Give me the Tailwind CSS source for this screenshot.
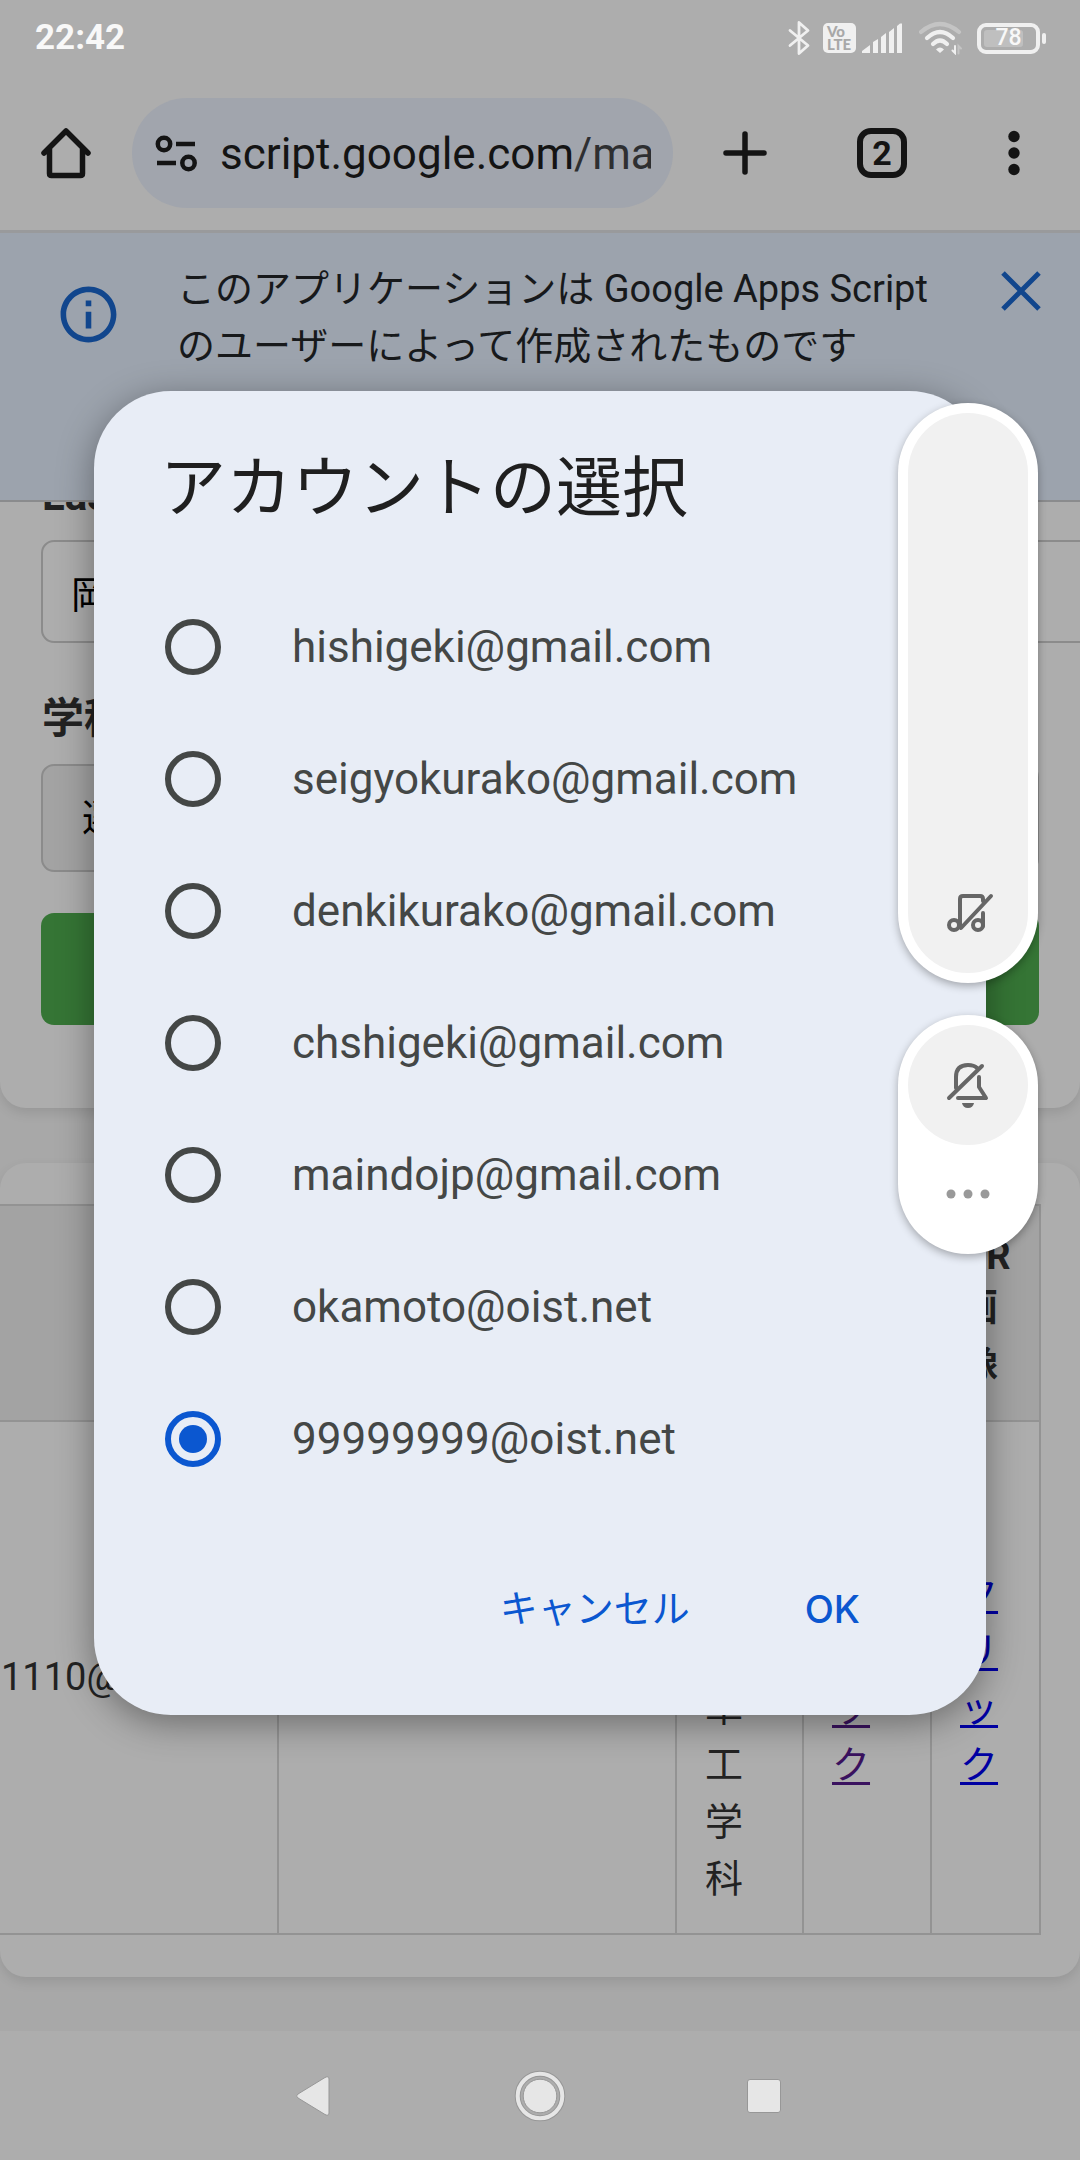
<!DOCTYPE html>
<html lang="ja">
<head>
<meta charset="utf-8">
<meta name="viewport" content="width=device-width, initial-scale=1">
<title>アカウントの選択</title>
<script src="https://cdn.jsdelivr.net/npm/@tailwindcss/browser@4"></script>
</head>
<body class="bg-[#adadad] font-['Roboto','Noto_Sans_CJK_JP',sans-serif] text-[#222]">
<div class="relative flex min-h-screen flex-col overflow-hidden">

  <!-- Status bar -->
  <header class="flex h-[75px] items-center justify-between pt-1 pr-[34px] pb-[3px] pl-[35px]">
    <time class="text-[35px] leading-10 font-bold text-[#f8f8f8]">22:42</time>
    <div class="flex items-center">
      <svg class="h-[36px] w-[24px]" viewBox="0 0 24 36" fill="none" stroke="#f0f0f0" stroke-width="2.8" stroke-linejoin="round" stroke-linecap="round"><path d="M3 10.500L21 25.500L12 33.500V2.500L21 10.500L3 25.500"/></svg>
      <span class="ml-3 flex h-[30px] w-[33px] flex-col items-start justify-center rounded-[5px] bg-[#f0f0f0] pl-1 font-['Lato',sans-serif] text-[15px] leading-[13px] font-black text-[#a8a8a8]"><span>Vo</span><span>LTE</span></span>
      <svg class="ml-1.5 h-[30px] w-[41px]" viewBox="0 0 41 30" fill="#f0f0f0"><path d="M0 30v-2l8-6v8zM11 30V19l5-3v14zM19 30V14l5-4v20zM27 30V9l5-4v25zM35 30V3l3-2.500h2V30z"/></svg>
      <svg class="ml-4 h-[34px] w-[44px]" viewBox="0 0 44 34" fill="none" stroke-width="4.200" stroke-linecap="round"><path d="M2 11Q21 -5 40 11" stroke="#c4c4c4"/><path d="M8 17Q21 5 34 17M14 23Q21 16 28 23" stroke="#f0f0f0"/><path d="M17 28.500q4-4 8 0l-4 3.500z" fill="#f0f0f0" stroke="none"/><path d="M36 25v7l-2.500-2.500" stroke="#f0f0f0" stroke-width="2" /><path d="M39.500 32.500V25l2.500 2.500" stroke="#c4c4c4" stroke-width="2"/></svg>
      <span class="relative ml-3.5 flex h-[31px] w-[63px] items-center justify-center rounded-[9px] border-[4px] border-[#f0f0f0] px-[3px]">
        <span class="absolute inset-y-[3px] right-[13px] left-[3px] rounded-[3px] bg-[#bfbfbf]"></span>
        <span class="relative text-[23px] leading-6 font-medium text-[#f8f8f8]">78</span>
      </span>
      <span class="ml-0.5 h-[11px] w-1 rounded-full bg-[#f0f0f0]"></span>
    </div>
  </header>

  <!-- Browser toolbar -->
  <div class="flex h-[158px] items-center border-b-[3px] border-[#999a9c] pt-px pr-[33px] pl-[33px] text-[#141414]">
    <button aria-label="ホーム" class="shrink-0"><svg class="h-[66px] w-[66px]" viewBox="0 0 66 66" fill="none" stroke="currentColor" stroke-width="5.500" stroke-linecap="round" stroke-linejoin="round"><path d="M11 33L33 11L55 33M16.500 28V53.500q0 2 2 2H47.500q2 0 2-2V28"/></svg></button>
    <div class="ml-[33px] flex h-[110px] min-w-0 flex-1 items-center rounded-full bg-[#a1a5ad] pr-[22px] pl-[22px]">
      <svg class="h-[42px] w-[44px] shrink-0" viewBox="0 0 44 42" fill="none" stroke="currentColor" stroke-width="4.500"><circle cx="10" cy="12" r="6.200"/><path d="M22 12H41M3 31H22"/><circle cx="34.500" cy="31" r="6.200"/></svg>
      <p class="ml-[22px] min-w-0 flex-1 overflow-hidden pt-0.5 text-[44px] leading-[60px] whitespace-nowrap">script.google.com<span class="text-[#2e2f31]">/ma</span></p>
    </div>
    <button aria-label="新しいタブ" class="ml-[39px] shrink-0"><svg class="h-[66px] w-[66px]" viewBox="0 0 66 66" stroke="currentColor" stroke-width="5.500" stroke-linecap="round"><path d="M33 14V52M14 33H52"/></svg></button>
    <button aria-label="タブを切り替える" class="ml-[79px] flex h-[50px] w-[50px] shrink-0 items-center justify-center rounded-[14px] border-[6px] border-current text-[34px] leading-10 font-bold">2</button>
    <button aria-label="メニュー" class="ml-[74px] shrink-0"><svg class="h-[66px] w-[66px]" viewBox="0 0 66 66" fill="currentColor"><circle cx="33" cy="16.500" r="5.700"/><circle cx="33" cy="33" r="5.700"/><circle cx="33" cy="49.500" r="5.700"/></svg></button>
  </div>

  <!-- Apps Script notice -->
  <section class="z-10 flex h-[269px] items-start border-b-2 border-[#8a8b8d] bg-[#9ca3ad] pt-[28px] pr-[33px] pl-[55px]">
    <svg class="mt-[20px] h-[67px] w-[67px] shrink-0" viewBox="0 0 24 24" fill="#11468d"><path d="M11 7h2v2h-2zm0 4h2v6h-2zm1-9C6.480 2 2 6.480 2 12s4.480 10 10 10 10-4.480 10-10S17.520 2 12 2zm0 18c-4.410 0-8-3.590-8-8s3.590-8 8-8 8 3.590 8 8-3.590 8-8 8z"/></svg>
    <p class="ml-[55px] flex-1 text-[38px] leading-[57px] text-[#17191b]">このアプリケーションは Google Apps Script のユーザーによって作成されたものです</p>
    <button aria-label="閉じる" class="ml-5 shrink-0"><svg class="h-[56px] w-[52px]" viewBox="0 0 52 56" stroke="#11468d" stroke-width="5"><path d="M8 12L44 48M44 12L8 48"/></svg></button>
  </section>

  <!-- Page content -->
  <main class="flex-1 bg-[#a8a8a8]">
    <form class="-mt-[36px] rounded-b-[26px] bg-[#adadad] px-[41px] pb-[83px] shadow-[0_5px_12px_rgba(0,0,0,0.1)]">
      <label for="last" class="block pl-px text-[42px] leading-[60px] font-bold">Last Name</label>
      <input id="last" type="text" value="岡" class="mt-[14px] h-[103px] w-[calc(100%+60px)] rounded-[13px] border-2 border-[#8b8b8b] px-[28px] text-[38px] text-black">
      <label for="dept" class="mt-[46px] block pl-px text-[42px] leading-[60px] font-bold">学科</label>
      <select id="dept" class="mt-[15px] block h-[108px] w-full appearance-none rounded-[13px] border-2 border-[#8b8b8b] bg-[#a3a3a3] px-[39px] text-[38px] text-black"><option>選択</option></select>
      <button type="button" aria-label="送信" class="mt-[41px] block h-[112px] w-full rounded-[13px] bg-[#357535]"></button>
    </form>

    <section class="mt-[55px] rounded-[26px] bg-[#adadad] pt-[41px] pr-[39px] pb-[42px] shadow-[0_5px_12px_rgba(0,0,0,0.1)]">
      <table class="w-full table-fixed border-collapse border-y-2 border-r-2 border-[#939393] text-left text-[38px] leading-[57px]">
        <colgroup><col class="w-[278px]"><col><col class="w-[127px]"><col class="w-[128px]"><col class="w-[109px]"></colgroup>
        <thead class="bg-[#a3a3a3]">
          <tr class="border-b-2 border-[#939393]">
            <th class="border-r-2 border-[#939393]"></th><th class="border-r-2 border-[#939393]"></th><th class="border-r-2 border-[#939393]"></th><th class="border-r-2 border-[#939393]"></th>
            <th class="px-[28px] py-[27px] font-bold"><span class="block leading-[46px]">QR</span>画像</th>
          </tr>
        </thead>
        <tbody>
          <tr>
            <td class="border-r-2 border-[#939393] pl-px">1110@</td>
            <td class="border-r-2 border-[#939393]"></td>
            <td class="border-r-2 border-[#939393] px-[28px] pt-[30px] pb-[25px]">機械自動車工学科</td>
            <td class="border-r-2 border-[#939393] px-[28px] pt-[5px]"><a href="#" class="text-[#3a125f] underline decoration-3 underline-offset-4">クリック</a></td>
            <td class="px-[28px] pt-[5px]"><a href="#" class="text-[#0000a2] underline decoration-3 underline-offset-4">クリック</a></td>
          </tr>
        </tbody>
      </table>
    </section>
    <div class="h-[54px]"></div>
  </main>

  <!-- System navigation -->
  <nav class="grid h-[130px] grid-cols-[1fr_414px_1fr] items-center">
    <button aria-label="戻る" class="justify-self-end"><svg class="h-[44px] w-[38px]" viewBox="0 0 38 44" fill="#e6e6e6" stroke="#979797"><path d="M3 20L30 3.500q4-2 4 1.500V39q0 3.500-4 1.500L3 24q-3-2 0-4z"/></svg></button>
    <button aria-label="ホーム画面" class="justify-self-center"><svg class="h-[52px] w-[52px]" viewBox="0 0 52 52" fill="none"><circle cx="26" cy="26" r="22.300" stroke="#979797" stroke-width="6"/><circle cx="26" cy="26" r="22.300" stroke="#e6e6e6" stroke-width="4"/><circle cx="26" cy="26" r="16.800" fill="#e6e6e6" stroke="#979797"/></svg></button>
    <button aria-label="最近のアプリ" class="h-[34px] w-[34px] rounded-[3px] border border-[#979797] bg-[#e6e6e6]"></button>
  </nav>

  <!-- Account chooser -->
  <div class="absolute inset-x-0 top-[75px] bottom-[130px] z-20 flex items-center px-[94px]">
    <form role="dialog" aria-labelledby="chooser" class="flex w-full flex-col rounded-[77px] bg-[#e8edf6] pt-[50px] pb-[51px] shadow-[0_8px_36px_rgba(0,0,0,0.38)]">
      <h1 id="chooser" class="px-[66px] text-[66px] leading-[96px] text-[#1f1f1f]">アカウントの選択</h1>
      <div class="mt-[44px] px-[71px] text-[44px] leading-[60px] text-[#444746]">
        <label class="flex h-[132px] items-center gap-[71px]"><input type="radio" name="account" class="h-[56px] w-[56px] appearance-none rounded-full border-[6px] border-[#444746]">hishigeki@gmail.com</label>
        <label class="flex h-[132px] items-center gap-[71px]"><input type="radio" name="account" class="h-[56px] w-[56px] appearance-none rounded-full border-[6px] border-[#444746]">seigyokurako@gmail.com</label>
        <label class="flex h-[132px] items-center gap-[71px]"><input type="radio" name="account" class="h-[56px] w-[56px] appearance-none rounded-full border-[6px] border-[#444746]">denkikurako@gmail.com</label>
        <label class="flex h-[132px] items-center gap-[71px]"><input type="radio" name="account" class="h-[56px] w-[56px] appearance-none rounded-full border-[6px] border-[#444746]">chshigeki@gmail.com</label>
        <label class="flex h-[132px] items-center gap-[71px]"><input type="radio" name="account" class="h-[56px] w-[56px] appearance-none rounded-full border-[6px] border-[#444746]">maindojp@gmail.com</label>
        <label class="flex h-[132px] items-center gap-[71px]"><input type="radio" name="account" class="h-[56px] w-[56px] appearance-none rounded-full border-[6px] border-[#444746]">okamoto@oist.net</label>
        <label class="flex h-[132px] items-center gap-[71px]"><input type="radio" name="account" checked class="h-[56px] w-[56px] appearance-none rounded-full border-[6px] border-[#0b57d0] bg-[#0b57d0] bg-clip-content p-2">99999999@oist.net</label>
      </div>
      <div class="mt-[49px] flex h-[110px] justify-end px-[71px] text-[38px] text-[#0b57d0]">
        <button type="button" class="px-[60px]">キャンセル</button>
        <button type="button" class="px-[55px] font-['Inter',sans-serif] font-medium">OK</button>
      </div>
    </form>
  </div>

  <!-- Volume controls -->
  <aside class="absolute top-[403px] right-[42px] z-30 flex w-[140px] flex-col gap-[32px] text-[#666]">
    <div class="h-[580px] rounded-full bg-white p-[10px] shadow-[0_3px_8px_rgba(0,0,0,0.3)]">
      <button aria-label="メディアの音量" class="flex h-full w-full items-end justify-center rounded-full bg-[#f1f1f1] pb-[35px] pl-1"><svg class="h-[50px] w-[52px]" viewBox="0 0 52 50" fill="none" stroke="currentColor" stroke-width="4" stroke-linecap="round" stroke-linejoin="round"><path d="M16 38V11q0-3 3-3H36q3 0 3 3V13M39 25V38M17 40L47 8"/><circle cx="10" cy="37" r="5"/><circle cx="34" cy="37" r="5"/></svg></button>
    </div>
    <div class="flex h-[239px] flex-col items-center rounded-[70px] bg-white pt-[10px] shadow-[0_3px_8px_rgba(0,0,0,0.3)]">
      <button aria-label="サイレント" class="flex h-[120px] w-[120px] items-center justify-center rounded-full bg-[#f1f1f1]"><svg class="h-[50px] w-[50px]" viewBox="0 0 50 50" fill="none" stroke="currentColor" stroke-width="4" stroke-linecap="round" stroke-linejoin="round"><path d="M13 28V17Q13 5 25 5Q31 5 34 8M36 17V27L43 38H15M6 38L39 6"/><path d="M19 43H31q-1 5-6 5t-6-5z" fill="currentColor" stroke="none"/></svg></button>
      <button aria-label="その他" class="mt-[38px] text-[#999]"><svg class="h-[22px] w-[50px]" viewBox="0 0 50 22" fill="currentColor"><circle cx="8" cy="11" r="4.500"/><circle cx="25" cy="11" r="4.500"/><circle cx="42" cy="11" r="4.500"/></svg></button>
    </div>
  </aside>
</div>
</body>
</html>
